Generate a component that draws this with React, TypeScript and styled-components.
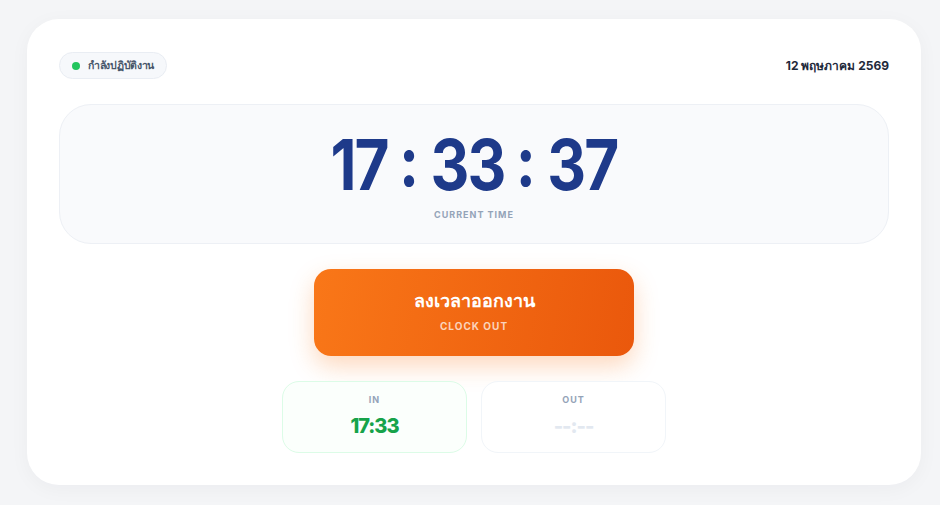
import React from "react";
import styled, { createGlobalStyle } from "styled-components";

const Global = createGlobalStyle`
  * { box-sizing: border-box; }
  html, body { margin: 0; padding: 0; background: #f4f5f7; }
  body { font-family: Inter, "Noto Sans", sans-serif; }
`;

const Page = styled.div`
  width: 940px;
  height: 505px;
  padding: 19px 19px 20px 27px;
  background: #f4f5f7;
`;

const Card = styled.div`
  width: 894px;
  height: 466px;
  background: #ffffff;
  border-radius: 32px;
  box-shadow: 0 4px 20px rgba(15, 23, 42, 0.04);
  padding: 33px 32px 32px 32px;
  display: flex;
  flex-direction: column;
  align-items: center;
`;

const TopRow = styled.div`
  width: 100%;
  display: flex;
  justify-content: space-between;
  align-items: center;
`;

const Badge = styled.div`
  display: flex;
  align-items: center;
  gap: 8px;
  height: 27px;
  padding: 0 12px 0 12px;
  border-radius: 14px;
  background: #f6f8fb;
  border: 1px solid #e9edf3;
  font-size: 10.5px;
  font-weight: 600;
  letter-spacing: -0.3px;
  color: #475569;
`;

const Dot = styled.span`
  width: 8px;
  height: 8px;
  border-radius: 50%;
  background: #22c55e;
`;

const DateText = styled.div`
  font-size: 12px;
  font-weight: 700;
  color: #1e293b;
`;

const ClockPanel = styled.div`
  width: 100%;
  height: 141px;
  margin-top: 25px;
  border-radius: 32px;
  background: #f9fafc;
  border: 1px solid #edf0f5;
  display: flex;
  flex-direction: column;
  align-items: center;
  padding-top: 25px;
  gap: 9px;
`;

const Time = styled.div`
  display: flex;
  align-items: center;
  gap: 13px;
  font-size: 70px;
  line-height: 70px;
  font-weight: 700;
  color: #1e3a8a;
  letter-spacing: -2px;
  transform: scaleX(0.86);
`;

const Colon = styled.span`
  letter-spacing: 0;
  position: relative;
  top: -4px;
`;

const SmallLabel = styled.div<{ $color: string; $size?: number }>`
  font-size: ${(p) => p.$size ?? 9}px;
  line-height: 12px;
  font-weight: 700;
  letter-spacing: 1px;
  color: ${(p) => p.$color};
  text-transform: uppercase;
`;

const ClockOutButton = styled.button`
  margin-top: 25px;
  width: 320px;
  height: 87px;
  border: none;
  border-radius: 17px;
  background: linear-gradient(100deg, #f97718 0%, #ea580c 100%);
  box-shadow: 0 10px 24px rgba(249, 115, 22, 0.28);
  color: #fff;
  display: flex;
  flex-direction: column;
  align-items: center;
  justify-content: center;
  gap: 8px;
  padding-bottom: 4px;
  font-family: inherit;
  cursor: pointer;
`;

const ButtonTitle = styled.div`
  font-size: 18px;
  font-weight: 700;
  line-height: 22px;
`;

const Records = styled.div`
  margin-top: 25px;
  display: flex;
  gap: 14px;
`;

const RecordBox = styled.div<{ $active: boolean }>`
  width: 185px;
  height: 72px;
  border-radius: 17px;
  border: 1px solid ${(p) => (p.$active ? "#dcfce7" : "#f1f5f9")};
  background: ${(p) => (p.$active ? "#fbfffc" : "#ffffff")};
  display: flex;
  flex-direction: column;
  align-items: center;
  padding-top: 12px;
  gap: 8px;
`;

const RecordValue = styled.div<{ $active: boolean }>`
  font-size: 20px;
  line-height: 24px;
  font-weight: 800;
  letter-spacing: -1px;
  color: ${(p) => (p.$active ? "#16a34a" : "#e2e8f0")};
`;

export default function App() {
  return (
    <Page>
      <Global />
      <Card>
        <TopRow>
          <Badge>
            <Dot />
            กำลังปฏิบัติงาน
          </Badge>
          <DateText>12 พฤษภาคม 2569</DateText>
        </TopRow>
        <ClockPanel>
          <Time>
            <span>17</span>
            <Colon>:</Colon>
            <span>33</span>
            <Colon>:</Colon>
            <span>37</span>
          </Time>
          <SmallLabel $color="#94a3b8">Current Time</SmallLabel>
        </ClockPanel>
        <ClockOutButton>
          <ButtonTitle>ลงเวลาออกงาน</ButtonTitle>
          <SmallLabel $color="rgba(255,255,255,0.72)" $size={10}>
            Clock Out
          </SmallLabel>
        </ClockOutButton>
        <Records>
          <RecordBox $active>
            <SmallLabel $color="#94a3b8">In</SmallLabel>
            <RecordValue $active>17:33</RecordValue>
          </RecordBox>
          <RecordBox $active={false}>
            <SmallLabel $color="#94a3b8">Out</SmallLabel>
            <RecordValue $active={false}>--:--</RecordValue>
          </RecordBox>
        </Records>
      </Card>
    </Page>
  );
}
